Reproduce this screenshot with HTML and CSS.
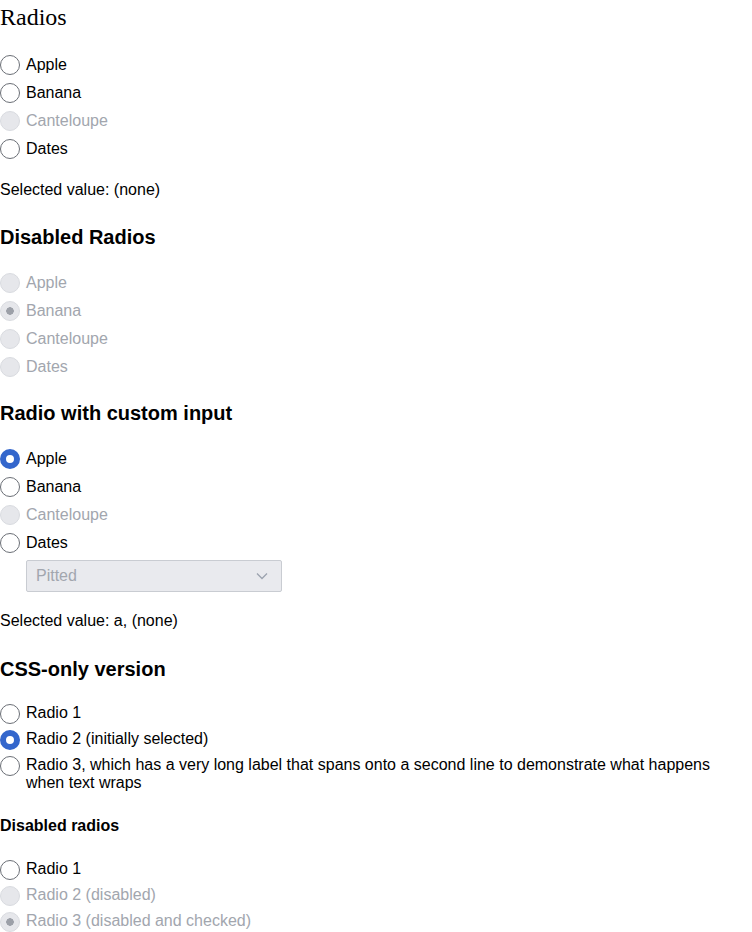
FILE: index.html
```html
<!DOCTYPE html>
<html lang="en">
<head>
    <meta charset="UTF-8">
    <meta name="viewport" content="width=device-width, initial-scale=1.0">
    <link rel="stylesheet" href="styles.css">
</head>
<body>
    <!-- Basic radios -->
    <h1 class="page-title">Radios</h1>
    <div class="radio-group">
        <label class="radio-row"><input type="radio" name="fruit"><span>Apple</span></label>
        <label class="radio-row"><input type="radio" name="fruit"><span>Banana</span></label>
        <label class="radio-row disabled"><input type="radio" name="fruit" disabled><span>Canteloupe</span></label>
        <label class="radio-row"><input type="radio" name="fruit"><span>Dates</span></label>
    </div>
    <p class="selected">Selected value: (none)</p>

    <!-- Whole group disabled -->
    <h2 class="section-title">Disabled Radios</h2>
    <div class="radio-group">
        <label class="radio-row disabled"><input type="radio" name="fruit2" disabled><span>Apple</span></label>
        <label class="radio-row disabled"><input type="radio" name="fruit2" disabled checked><span>Banana</span></label>
        <label class="radio-row disabled"><input type="radio" name="fruit2" disabled><span>Canteloupe</span></label>
        <label class="radio-row disabled"><input type="radio" name="fruit2" disabled><span>Dates</span></label>
    </div>

    <!-- Custom input -->
    <h2 class="section-title after-group">Radio with custom input</h2>
    <div class="radio-group">
        <label class="radio-row"><input type="radio" name="fruit3" checked><span>Apple</span></label>
        <label class="radio-row"><input type="radio" name="fruit3"><span>Banana</span></label>
        <label class="radio-row disabled"><input type="radio" name="fruit3" disabled><span>Canteloupe</span></label>
        <label class="radio-row"><input type="radio" name="fruit3"><span>Dates</span></label>
    </div>
    <div class="custom-select">
        <span>Pitted</span>
        <svg width="12" height="8" viewBox="0 0 12 8"><path d="M1 1.5l5 5 5-5" fill="none" stroke="#9ca3af" stroke-width="1.3"/></svg>
    </div>
    <p class="selected">Selected value: a, (none)</p>

    <!-- CSS-only -->
    <h2 class="section-title css-title">CSS-only version</h2>
    <div class="css-group">
        <label class="css-row"><input type="radio" name="css1"><span>Radio 1</span></label>
        <label class="css-row"><input type="radio" name="css1" checked><span>Radio 2 (initially selected)</span></label>
        <label class="css-row"><input type="radio" name="css1"><span>Radio 3, which has a very long label that spans onto a second line to demonstrate what happens when text wraps</span></label>
    </div>

    <h3 class="sub-title">Disabled radios</h3>
    <div class="css-group last">
        <label class="css-row"><input type="radio" name="css2"><span>Radio 1</span></label>
        <label class="css-row disabled"><input type="radio" name="css2" disabled><span>Radio 2 (disabled)</span></label>
        <label class="css-row disabled"><input type="radio" name="css2" disabled checked><span>Radio 3 (disabled and checked)</span></label>
    </div>
</body>
</html>
```

FILE: styles.css
```css
body {
    margin: 0;
    font-family: 'Liberation Sans', Arial, sans-serif;
    font-size: 16px;
    color: #000;
    background: #fff;
}
.page-title {
    margin: 0;
    font-family: 'Liberation Serif', 'Times New Roman', serif;
    font-size: 24px;
    font-weight: normal;
    line-height: 34px;
}
.section-title {
    margin: 20px 0 0;
    font-size: 20px;
    font-weight: bold;
    line-height: 30px;
}
.section-title.after-group {
    margin-top: 19px;
}
.section-title.css-title {
    margin-top: 21px;
}
.sub-title {
    margin: 22px 0 0;
    font-size: 16px;
    font-weight: bold;
    line-height: 24px;
}
.radio-group {
    display: flex;
    flex-direction: column;
    gap: 4px;
    margin-top: 19px;
}
.radio-row {
    display: flex;
    align-items: center;
    gap: 6px;
    height: 24px;
    line-height: 24px;
}
.selected {
    margin: 17px 0 0;
    line-height: 24px;
}
input[type="radio"] {
    appearance: none;
    -webkit-appearance: none;
    flex: none;
    width: 20px;
    height: 20px;
    margin: 0;
    border: 1px solid #6b6f76;
    border-radius: 50%;
    background: #fff;
    box-sizing: border-box;
}
input[type="radio"]:checked {
    border: 6px solid #3366cc;
    background: #fff;
}
input[type="radio"]:disabled {
    border: 1px solid #d9dbe0;
    background: #e6e7eb;
}
input[type="radio"]:disabled:checked {
    border: 1px solid #d9dbe0;
    background: radial-gradient(circle, #9ca0a8 0 3.5px, #e6e7eb 4px);
}
.disabled span {
    color: #a2a6ae;
}
.custom-select {
    display: flex;
    align-items: center;
    justify-content: space-between;
    box-sizing: border-box;
    width: 256px;
    height: 32px;
    margin: 5px 0 0 26px;
    padding: 0 13px 0 9px;
    background: #e9eaee;
    border: 1px solid #c9ccd2;
    border-radius: 2px;
    color: #a2a6ae;
}
.css-group {
    display: flex;
    flex-direction: column;
    gap: 6px;
    margin-top: 20px;
}
.css-group.last {
    margin-top: 22px;
}
.css-row {
    display: flex;
    align-items: flex-start;
    gap: 6px;
    line-height: 18px;
    padding-right: 24px;
}
```
